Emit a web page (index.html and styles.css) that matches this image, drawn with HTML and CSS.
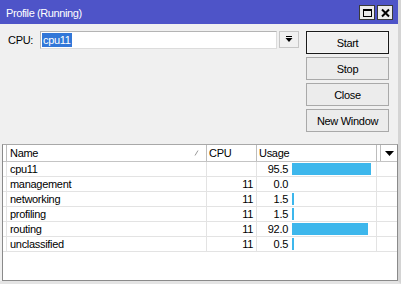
FILE: index.html
```html
<!DOCTYPE html>
<html>
<head>
<meta charset="utf-8">
<link rel="stylesheet" href="styles.css">
</head>
<body>
<div class="window">
  <div class="titlebar">
    <span class="title">Profile (Running)</span>
    <div class="tb-buttons">
      <span class="tb-btn">
        <svg width="13" height="12" viewBox="0 0 13 12"><rect x="2.5" y="2.5" width="8" height="7" fill="none" stroke="#000" stroke-width="1"/><rect x="2" y="2" width="9" height="2" fill="#000"/></svg>
      </span>
      <span class="tb-btn">
        <svg width="13" height="12" viewBox="0 0 13 12"><path d="M3 2.5 L10 9.5 M10 2.5 L3 9.5" stroke="#000" stroke-width="2" fill="none"/></svg>
      </span>
    </div>
  </div>
  <div class="top">
    <div class="cpu-row">
      <span class="label">CPU:</span>
      <div class="combo"><span class="sel">cpu11</span></div>
      <div class="dd-btn">
        <svg width="8" height="7" viewBox="0 0 8 7"><rect x="1" y="0" width="6" height="1" fill="#000"/><path d="M0.5 2 L7.5 2 L4 6 Z" fill="#000"/></svg>
      </div>
    </div>
    <div class="buttons">
      <div class="btn default">Start</div>
      <div class="btn">Stop</div>
      <div class="btn">Close</div>
      <div class="btn">New Window</div>
    </div>
  </div>
  <div class="list">
    <div class="row head">
      <div class="c c0"></div>
      <div class="c name">Name<svg class="sort" width="5" height="6" viewBox="0 0 5 6"><path d="M1 5.5 L4 0.5" stroke="#9a9a9a" stroke-width="1" fill="none"/></svg></div>
      <div class="c cpu-h">CPU</div>
      <div class="c usage-h">Usage</div>
      <div class="c gap"></div>
      <div class="c menu"><svg width="9" height="5" viewBox="0 0 9 5"><path d="M0 0 L9 0 L4.5 5 Z" fill="#000"/></svg></div>
    </div>
    <div class="row">
      <div class="c c0"></div>
      <div class="c name">cpu11</div>
      <div class="c cpu"></div>
      <div class="c usage"><span class="num">95.5</span><span class="bar" style="width:79px"></span></div>
    </div>
    <div class="row">
      <div class="c c0"></div>
      <div class="c name">management</div>
      <div class="c cpu">11</div>
      <div class="c usage"><span class="num">0.0</span></div>
    </div>
    <div class="row">
      <div class="c c0"></div>
      <div class="c name">networking</div>
      <div class="c cpu">11</div>
      <div class="c usage"><span class="num">1.5</span><span class="bar" style="width:2px"></span></div>
    </div>
    <div class="row">
      <div class="c c0"></div>
      <div class="c name">profiling</div>
      <div class="c cpu">11</div>
      <div class="c usage"><span class="num">1.5</span><span class="bar" style="width:2px"></span></div>
    </div>
    <div class="row">
      <div class="c c0"></div>
      <div class="c name">routing</div>
      <div class="c cpu">11</div>
      <div class="c usage"><span class="num">92.0</span><span class="bar" style="width:76px"></span></div>
    </div>
    <div class="row">
      <div class="c c0"></div>
      <div class="c name">unclassified</div>
      <div class="c cpu">11</div>
      <div class="c usage"><span class="num">0.5</span><span class="bar" style="width:2px"></span></div>
    </div>
  </div>
</div>
</body>
</html>
```

FILE: styles.css
```css
html, body {
  margin: 0;
  padding: 0;
  background: #f0f0f0;
}

body {
  font-family: "Liberation Sans", Arial, sans-serif;
  font-size: 11px;
  letter-spacing: -0.3px;
  color: #000;
}

.window {
  width: 401px;
  height: 284px;
  box-sizing: border-box;
  border-right: 3px solid #d4d4d4;
  border-bottom: 3px solid #e4e4e4;
  background: #f0f0f0;
  display: flex;
  flex-direction: column;
}

.titlebar {
  height: 24px;
  flex: none;
  box-sizing: border-box;
  background: #4e54c8;
  color: #fff;
  display: flex;
  align-items: center;
  padding: 2px 5px 0 6px;
}

.title {
  font-size: 11px;
  letter-spacing: -0.4px;
}

.tb-buttons {
  margin-left: auto;
  display: flex;
  gap: 2px;
  margin-top: -1px;
}

.tb-btn {
  width: 14px;
  height: 13px;
  border: 1px solid #3a3a3a;
  background: #ececec;
  display: flex;
  align-items: center;
  justify-content: center;
}

.tb-btn svg {
  display: block;
}

.top {
  height: 120px;
  flex: none;
  box-sizing: border-box;
  display: flex;
  padding: 7px 9px 0 8px;
}

.cpu-row {
  display: flex;
  align-items: flex-start;
}

.label {
  width: 32px;
  line-height: 18px;
}

.combo {
  width: 237px;
  height: 18px;
  box-sizing: border-box;
  background: #fff;
  border: 1px solid #b4b4b4;
  border-right-color: #dcdcdc;
  border-bottom-color: #dcdcdc;
  padding: 1px 0 0 1px;
}

.sel {
  display: inline-block;
  background: #3277d8;
  color: #fff;
  line-height: 14px;
  padding: 0 1px;
}

.dd-btn {
  margin-left: 2px;
  width: 20px;
  height: 17px;
  box-sizing: border-box;
  border: 1px solid #c6c6c6;
  background: #f0f0f0;
  display: flex;
  align-items: center;
  justify-content: center;
}

.dd-btn svg {
  display: block;
}

.buttons {
  margin-left: auto;
  width: 83px;
  display: flex;
  flex-direction: column;
  gap: 3px;
}

.btn {
  height: 23px;
  box-sizing: border-box;
  border: 1px solid #a9a9a9;
  background: #ececec;
  display: flex;
  align-items: center;
  justify-content: center;
}

.btn.default {
  border-color: #1a1a1a;
  box-shadow: inset 0 0 0 1px #f6f6f6;
  background: #f0f0f0;
}

.list {
  margin-left: 2px;
  width: 396px;
  flex: 1;
  box-sizing: border-box;
  border: 1px solid #8a8a8a;
  border-top-color: #a8a8a8;
  background: #fff;
}

.row {
  display: flex;
  height: 15px;
  box-sizing: border-box;
  border-bottom: 1px solid #e3e3e3;
  line-height: 14px;
}

.row.head {
  height: 17px;
  border-bottom: 1px solid #c4c4c4;
  line-height: 16px;
}

.c {
  box-sizing: border-box;
  border-right: 1px solid #e3e3e3;
  white-space: nowrap;
  overflow: hidden;
}

.head .c {
  border-right-color: #bdbdbd;
}

.c0 {
  width: 4px;
}

.name {
  width: 200px;
  padding-left: 3px;
  display: flex;
  align-items: center;
}

.sort {
  margin-left: auto;
  margin-right: 7px;
}

.cpu, .cpu-h {
  width: 50px;
}

.cpu {
  text-align: right;
  padding-right: 3px;
}

.cpu-h {
  padding-left: 2px;
}

.usage, .usage-h {
  width: 120px;
}

.usage-h {
  padding-left: 2px;
}

.usage {
  display: flex;
  align-items: center;
}

.num {
  width: 31px;
  text-align: right;
  flex: none;
}

.bar {
  height: 12px;
  margin-left: 4px;
  background: #3db7ec;
  flex: none;
}

.gap {
  width: 4px;
}

.menu {
  width: 16px;
  border-right: none;
  display: flex;
  align-items: center;
  justify-content: center;
}

.menu svg {
  display: block;
}
```
